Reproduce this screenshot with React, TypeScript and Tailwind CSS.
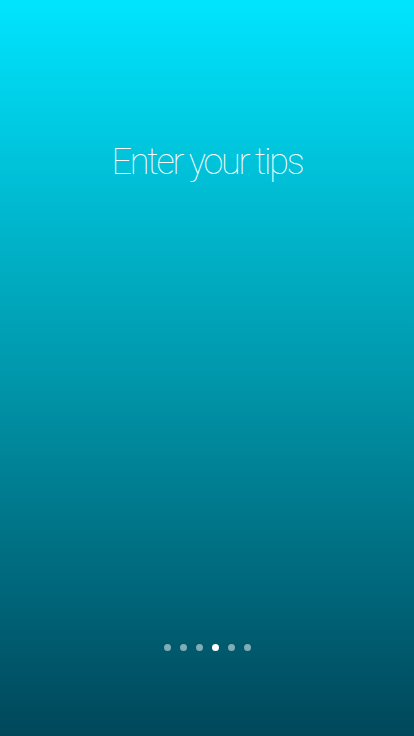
export default function App() {
  const dots = [0, 1, 2, 3, 4, 5];
  const active = 3;
  return (
    <div className="flex h-[736px] w-[414px] flex-col items-center bg-gradient-to-b from-[#00e5ff] via-[#0099ad] to-[#00475a] font-['Roboto',sans-serif] text-white">
      <h1 className="mt-[139px] text-[36px] font-thin leading-[46px] tracking-[-2.2px]">Enter your tips</h1>
      <div className="mt-auto mb-[85px] flex items-center gap-[9px]">
        {dots.map((d) => (
          <span
            key={d}
            className={d === active ? 'h-[7px] w-[7px] rounded-full bg-white' : 'h-[7px] w-[7px] rounded-full bg-white/50'}
          />
        ))}
      </div>
    </div>
  );
}
